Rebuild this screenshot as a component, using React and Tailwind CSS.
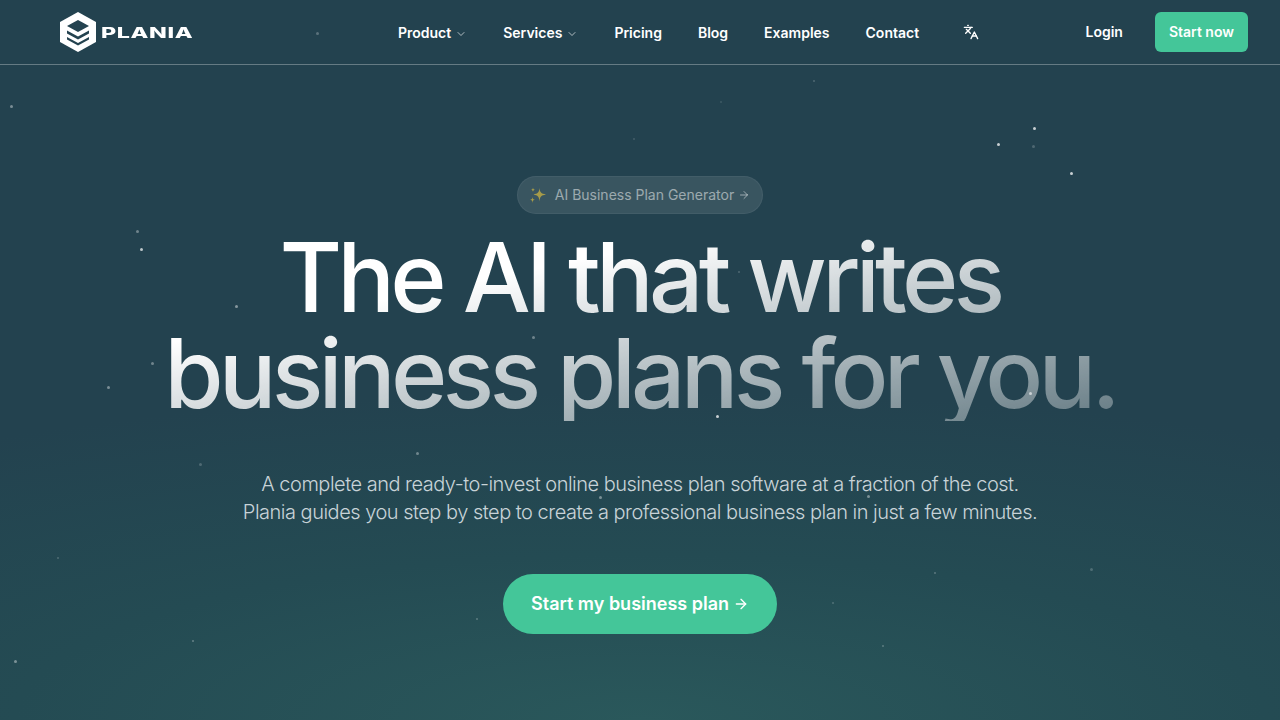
import React from "react";
import { ChevronDown, ArrowRight, Languages } from "lucide-react";

const NAV = [
  { label: "Product", caret: true },
  { label: "Services", caret: true },
  { label: "Pricing" },
  { label: "Blog" },
  { label: "Examples" },
  { label: "Contact" },
];

// x, y, size, opacity
const STARS = [
  [11, 106, 3, 0.4], [317, 33, 3, 0.25], [814, 81, 2, 0.2], [721, 102, 2, 0.12],
  [634, 139, 2, 0.15], [1034, 128, 3, 0.75], [998, 144, 3, 0.75], [1033, 146, 3, 0.2],
  [1071, 173, 3, 0.75], [137, 231, 3, 0.35], [141, 249, 3, 0.7], [236, 306, 3, 0.45],
  [152, 363, 3, 0.35], [108, 387, 3, 0.4], [533, 337, 3, 0.35], [739, 272, 2, 0.2],
  [417, 453, 3, 0.35], [200, 464, 3, 0.2], [717, 416, 3, 0.75], [1030, 393, 3, 0.6],
  [600, 497, 3, 0.4], [868, 496, 3, 0.4], [430, 520, 2, 0.3], [58, 558, 2, 0.2],
  [15, 661, 3, 0.4], [193, 641, 2, 0.3], [477, 619, 2, 0.25], [833, 603, 2, 0.2],
  [883, 646, 2, 0.25], [935, 573, 2, 0.25], [1091, 569, 3, 0.2],
];

const Logo = () => (
  <div className="flex items-center gap-[5px]">
    <svg width="36" height="40" viewBox="0 0 36 40">
      <path d="M18 0 L36 10 V30 L18 40 L0 30 V10 Z" fill="#fff" />
      <path d="M18 8 L29 14 L18 20 L7 14 Z" fill="#23424f" />
      <path d="M7 18.5 L18 24.5 L29 18.5 V21.5 L18 27.5 L7 21.5 Z" fill="#23424f" />
      <path d="M7 25 L18 31 L29 25 V27.5 L18 33.5 L7 27.5 Z" fill="#23424f" />
    </svg>
    <span className="w-[91px] origin-left scale-x-[1.55] text-[15px] font-extrabold leading-none tracking-[0.4px] text-white">
      PLANIA
    </span>
  </div>
);

const Sparkles = () => (
  <svg width="18" height="18" viewBox="0 0 18 18" fill="#a69b49">
    <path d="M10.5 2 C11 6.5 12 7.5 17 8.5 C12 9.5 11 10.5 10.5 15.5 C10 10.5 9 9.5 4.5 8.5 C9 7.5 10 6.5 10.5 2 Z" />
    <path d="M4 1.5 C4.2 3 4.6 3.4 6 3.7 C4.6 4 4.2 4.4 4 6 C3.8 4.4 3.4 4 2 3.7 C3.4 3.4 3.8 3 4 1.5 Z" />
    <path d="M3.5 11 C3.7 13 4.2 13.5 6 13.8 C4.2 14.1 3.7 14.6 3.5 17 C3.3 14.6 2.8 14.1 1 13.8 C2.8 13.5 3.3 13 3.5 11 Z" />
  </svg>
);

export default function App() {
  return (
    <div className="relative h-[720px] w-[1280px] overflow-hidden bg-[#23424f] bg-[radial-gradient(ellipse_1250px_330px_at_50%_100%,#2a585b_0%,#244b53_50%,#23424f_100%)] font-['Inter',sans-serif] text-white">
      {STARS.map(([x, y, s, o], i) => (
        <span
          key={i}
          className="absolute rounded-full bg-white"
          style={{ left: x - s / 2, top: y - s / 2, width: s, height: s, opacity: o }}
        />
      ))}

      <header className="relative flex h-[65px] items-center border-b border-white/30 pl-[60px] pr-[32px]">
        <Logo />
        <nav className="ml-[206px] mt-0.5 flex items-center gap-9 text-sm font-semibold">
          {NAV.map((item) => (
            <span key={item.label} className="flex items-center gap-1">
              {item.label}
              {item.caret && <ChevronDown size={12} className="mt-px text-white/85" strokeWidth={1.5} />}
            </span>
          ))}
        </nav>
        <Languages size={16} className="ml-11" strokeWidth={2} />
        <span className="ml-auto text-sm font-semibold">Login</span>
        <button className="ml-8 h-10 rounded-md bg-[#44c699] px-3.5 text-sm font-semibold text-white">
          Start now
        </button>
      </header>

      <main className="relative flex flex-col items-center pt-[111px]">
        <div className="flex h-[38px] items-center rounded-full border border-white/5 bg-white/10 pl-[11px] pr-3 text-sm text-white/50">
          <Sparkles />
          <span className="ml-2">AI Business Plan Generator</span>
          <ArrowRight size={12} className="ml-1" />
        </div>

        <h1 className="mt-[15px] bg-gradient-to-br from-white from-30% to-white/30 bg-clip-text text-center text-8xl font-medium leading-none tracking-tighter text-transparent">
          The AI that writes
          <br />
          business plans for you.
        </h1>

        <p className="mt-[49px] text-center text-xl font-light leading-7 tracking-tight text-[#c8d3d8]">
          A complete and ready-to-invest online business plan software at a fraction of the cost.
          <br />
          Plania guides you step by step to create a professional business plan in just a few minutes.
        </p>

        <button className="mt-[48px] flex h-[60px] items-center gap-1 rounded-full bg-[#44c699] px-7 text-lg font-semibold text-white">
          Start my business plan
          <ArrowRight size={16} />
        </button>
      </main>
    </div>
  );
}
